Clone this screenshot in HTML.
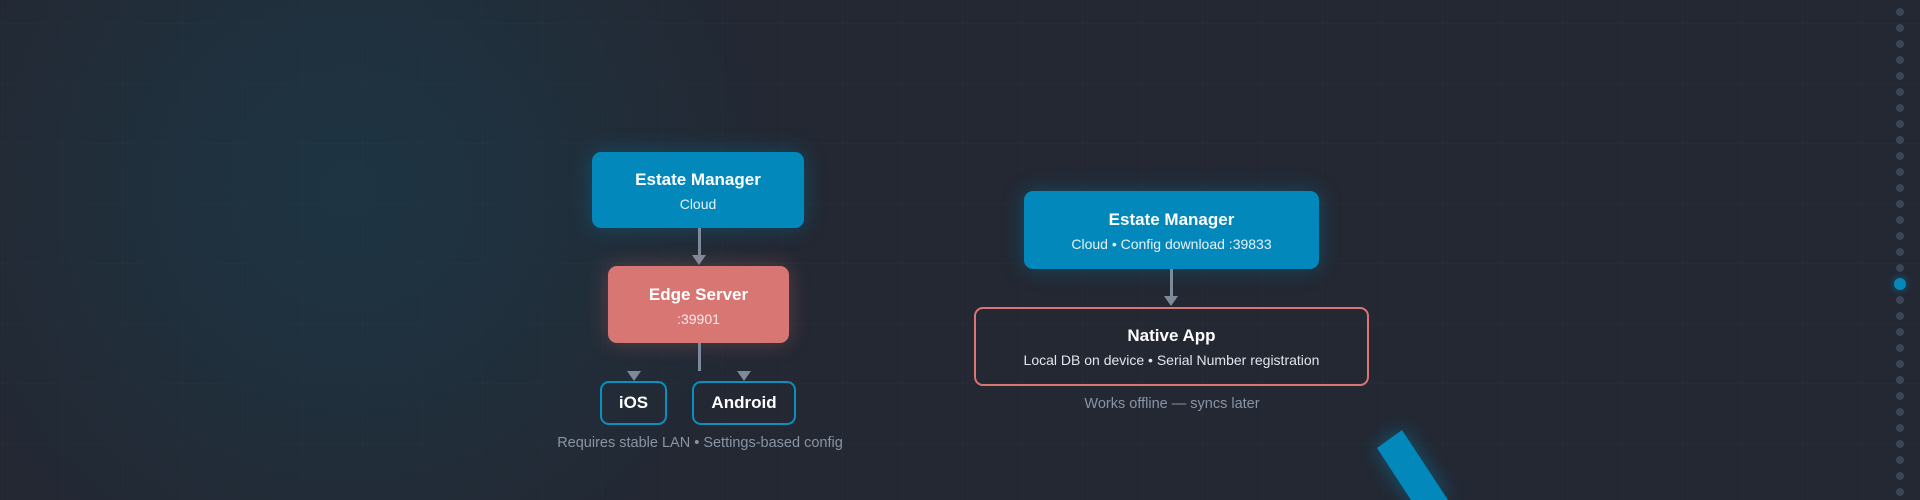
<!DOCTYPE html>
<html><head><meta charset="utf-8"><style>
html,body{margin:0;padding:0}
body{width:1920px;height:500px;overflow:hidden;position:relative;background:#232833;font-family:"Liberation Sans",sans-serif;}
.bg{position:absolute;inset:0;background:radial-gradient(circle at 350px 190px,#1e3442 0,#1f313f 140px,#212d39 280px,rgba(35,40,51,0) 430px);}
.grid{position:absolute;inset:0;background-image:linear-gradient(rgba(255,255,255,0.012) 1px,transparent 1px),linear-gradient(90deg,rgba(255,255,255,0.012) 1px,transparent 1px);background-size:60px 60px;background-position:2px 23px;}
.box{position:absolute;box-sizing:border-box;border-radius:9px;text-align:center;color:#fff;}
.t{font-weight:bold;font-size:17px;}
.s{font-size:14px;color:#e6f2f8;margin-top:6px}
.blue{background:#0288bb;box-shadow:0 0 22px rgba(2,136,187,0.35);}
.red{background:#d77673;box-shadow:0 0 22px rgba(215,118,115,0.3);}
.line{position:absolute;width:3px;background:#7d8a9b}
.tri{position:absolute;width:0;height:0;border-left:7px solid transparent;border-right:7px solid transparent;border-top:10px solid #7d8a9b}
.cap{position:absolute;font-size:14.5px;color:#8a94a3;text-align:center}
.dot{position:absolute;left:1896px;width:8px;height:8px;border-radius:50%;background:#3d4654}
</style></head><body>
<div class="bg"></div><div class="grid"></div>

<div class="box blue" style="left:592px;top:152px;width:212px;height:76px;padding-top:18px"><div class="t">Estate Manager</div><div class="s">Cloud</div></div>
<div class="line" style="left:698px;top:228px;height:28px"></div>
<div class="tri" style="left:692px;top:255px"></div>
<div class="box red" style="left:608px;top:266px;width:181px;height:77px;padding-top:19px"><div class="t">Edge Server</div><div class="s" style="color:#fbe9e8">:39901</div></div>
<div class="line" style="left:698px;top:343px;height:28px"></div>
<div class="tri" style="left:627px;top:371px"></div>
<div class="tri" style="left:737px;top:371px"></div>
<div class="box" style="left:600px;top:381px;width:67px;height:44px;border:2px solid #0a8fc0;line-height:40px"><span class="t">iOS</span></div>
<div class="box" style="left:692px;top:381px;width:104px;height:44px;border:2px solid #0a8fc0;line-height:40px"><span class="t">Android</span></div>
<div class="cap" style="left:500px;width:400px;top:435px">Requires stable LAN • Settings-based config</div>

<div class="box blue" style="left:1024px;top:191px;width:295px;height:78px;padding-top:19px"><div class="t">Estate Manager</div><div class="s">Cloud • Config download :39833</div></div>
<div class="line" style="left:1170px;top:269px;height:28px"></div>
<div class="tri" style="left:1164px;top:296px"></div>
<div class="box" style="left:974px;top:307px;width:395px;height:79px;border:2px solid #d77673;padding-top:17px"><div class="t">Native App</div><div class="s" style="color:#e2e5ea">Local DB on device • Serial Number registration</div></div>
<div class="cap" style="left:972px;width:400px;top:396px">Works offline — syncs later</div>

<svg style="position:absolute;left:0;top:0" width="1920" height="500">
<defs><filter id="g" x="-1" y="-1" width="3" height="3"><feGaussianBlur stdDeviation="10"/></filter></defs>
<polygon points="1377,448 1402,430 1448,500 1411,500" fill="#0288bb" opacity="0.5" filter="url(#g)"/>
<polygon points="1377,448 1402,430 1448,500 1411,500" fill="#0288bb"/>
</svg>

<div id="dots"></div>
<script>
var h='';for(var i=0;i<31;i++){var y=12+i*16;if(i==17){h+='<div class="dot" style="left:1894px;top:'+(y-6)+'px;width:12px;height:12px;background:#0288bb;box-shadow:0 0 8px rgba(2,136,187,.6)"></div>';}else h+='<div class="dot" style="top:'+(y-4)+'px"></div>';}
document.getElementById('dots').innerHTML=h;
</script>
</body></html>
